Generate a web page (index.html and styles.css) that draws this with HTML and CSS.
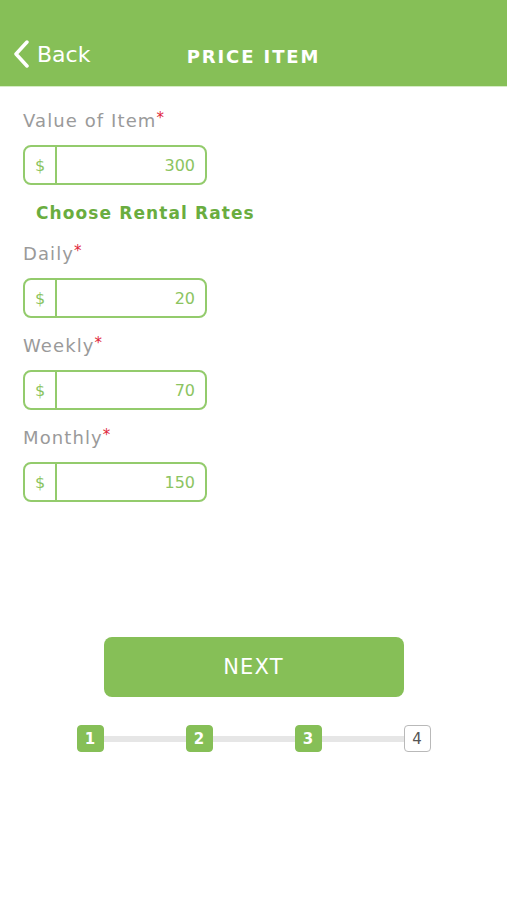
FILE: index.html
```html
<!DOCTYPE html>
<html lang="en">
<head>
    <meta charset="UTF-8">
    <meta name="viewport" content="width=device-width, initial-scale=1.0">
    <title>Price Item</title>
    <link rel="stylesheet" href="styles.css">
</head>
<body>
    <header class="top-bar">
        <div class="back">
            <svg class="back-icon" width="18" height="28" viewBox="0 0 18 28">
                <path d="M15 2 L4 14 L15 26" fill="none" stroke="#fff" stroke-width="3.5" stroke-linecap="round" stroke-linejoin="round"/>
            </svg>
            <span>Back</span>
        </div>
        <h1 class="title">PRICE ITEM</h1>
        <div></div>
    </header>

    <main class="form">
        <label class="field-label">Value of Item<span class="req">*</span></label>
        <div class="money-input">
            <span class="currency">$</span>
            <span class="amount">300</span>
        </div>

        <h2 class="section-title">Choose Rental Rates</h2>

        <label class="field-label">Daily<span class="req">*</span></label>
        <div class="money-input">
            <span class="currency">$</span>
            <span class="amount">20</span>
        </div>

        <label class="field-label">Weekly<span class="req">*</span></label>
        <div class="money-input">
            <span class="currency">$</span>
            <span class="amount">70</span>
        </div>

        <label class="field-label">Monthly<span class="req">*</span></label>
        <div class="money-input">
            <span class="currency">$</span>
            <span class="amount">150</span>
        </div>
    </main>

    <div class="footer">
        <button class="next-btn">NEXT</button>
        <div class="steps">
            <span class="step done">1</span>
            <span class="step-line"></span>
            <span class="step done">2</span>
            <span class="step-line"></span>
            <span class="step done">3</span>
            <span class="step-line"></span>
            <span class="step">4</span>
        </div>
    </div>
</body>
</html>
```

FILE: styles.css
```css
body {
    margin: 0;
    font-family: "DejaVu Sans", sans-serif;
    background: #fff;
    width: 507px;
    height: 900px;
}
.top-bar {
    background: #86bf57;
    height: 87px;
    border-bottom: 1px solid #d6ecc6;
    padding-top: 22px;
    box-sizing: border-box;
    display: grid;
    grid-template-columns: 1fr auto 1fr;
    align-items: center;
}
.back {
    display: flex;
    align-items: center;
    gap: 7px;
    color: #fff;
    font-size: 22px;
    padding-left: 12px;
}
.title {
    margin: 0;
    color: #fff;
    font-size: 18px;
    font-weight: bold;
    letter-spacing: 1.9px;
    padding-top: 4px;
}
.form {
    padding: 20px 0 0 23px;
    display: flex;
    flex-direction: column;
    align-items: flex-start;
}
.field-label {
    color: #9a9a9a;
    font-size: 18px;
    letter-spacing: 1.1px;
    height: 28px;
    line-height: 28px;
}
.req {
    color: #e0263a;
    font-size: 15px;
    vertical-align: top;
    line-height: 22px;
}
.money-input {
    margin-top: 10px;
    width: 184px;
    height: 40px;
    box-sizing: border-box;
    border: 2px solid #93cb6c;
    border-radius: 8px;
    display: flex;
    align-items: center;
    color: #8cc461;
    font-size: 16px;
}
.currency {
    width: 30px;
    height: 100%;
    border-right: 2px solid #93cb6c;
    display: flex;
    align-items: center;
    justify-content: center;
}
.amount {
    flex: 1;
    text-align: right;
    padding-right: 10px;
}
.section-title {
    margin: 16px 0 15px 13px;
    color: #6aad3f;
    font-size: 17px;
    font-weight: bold;
    letter-spacing: 1.1px;
    line-height: 24px;
}
.money-input + .field-label {
    margin-top: 14px;
}
.footer {
    margin-top: 135px;
    display: flex;
    flex-direction: column;
    align-items: center;
}
.next-btn {
    width: 300px;
    height: 60px;
    border: none;
    border-radius: 8px;
    background: #86bf57;
    color: #fff;
    font-family: "DejaVu Sans", sans-serif;
    font-size: 21px;
    letter-spacing: 1.2px;
}
.steps {
    margin-top: 28px;
    display: flex;
    align-items: center;
    width: 354px;
}
.step {
    width: 27px;
    height: 27px;
    box-sizing: border-box;
    border: 1px solid #b9b9b9;
    border-radius: 4px;
    background: #fff;
    color: #555;
    font-size: 15px;
    display: flex;
    align-items: center;
    justify-content: center;
}
.step.done {
    background: #86bf57;
    border-color: #86bf57;
    color: #fff;
    font-weight: bold;
}
.step-line {
    flex: 1;
    height: 6px;
    background: #e6e6e6;
}
```
